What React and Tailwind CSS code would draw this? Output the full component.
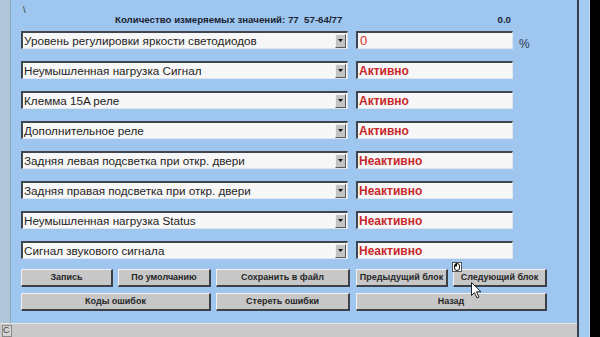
import React from "react";

const ROWS = [
  { label: "Уровень регулировки яркости светодиодов", value: "0", unit: "%" },
  { label: "Неумышленная нагрузка Сигнал", value: "Активно" },
  { label: "Клемма 15A реле", value: "Активно" },
  { label: "Дополнительное реле", value: "Активно" },
  { label: "Задняя левая подсветка при откр. двери", value: "Неактивно" },
  { label: "Задняя правая подсветка при откр. двери", value: "Неактивно" },
  { label: "Неумышленная нагрузка Status", value: "Неактивно" },
  { label: "Сигнал звукового сигнала", value: "Неактивно" },
];

const FIELD =
  "h-[18px] bg-[#f7f7f7] border-t-2 border-l-2 border-t-[#3f4650] border-l-[#3f4650] border-b border-r border-b-[#dfe6ee] border-r-[#dfe6ee]";

const BTN =
  "h-[18px] bg-[#c7c7c7] border-t border-l border-t-[#f2f2f2] border-l-[#f2f2f2] border-b-2 border-r-2 border-b-[#3c4048] border-r-[#3c4048] text-[9px] font-bold text-[#262626] flex items-center justify-center leading-none";

const ComboRow = ({ row }) => {
  const isNumber = row.value === "0";
  return (
    <div className="flex items-center h-[18px]">
      <div className={`${FIELD} w-[327px] flex items-center relative`}>
        <span className="pl-[1px] text-[11.7px] text-[#1e1e1e] leading-none whitespace-nowrap">
          {row.label}
        </span>
        <div className="ml-auto mr-[1px] w-[11px] h-[14px] bg-[#c4c4c4] border-t border-l border-[#f0f0f0] border-b border-r border-b-[#5a5a5a] border-r-[#5a5a5a] flex items-center justify-center">
          <svg width="5" height="3" viewBox="0 0 5 3">
            <path d="M0 0H5L2.5 3Z" fill="#111" />
          </svg>
        </div>
      </div>
      <div className={`${FIELD} w-[157px] ml-[8px] flex items-center`}>
        <span
          className={
            isNumber
              ? "pl-[2px] text-[13px] text-[#d2302c] leading-none"
              : "pl-[1px] text-[12px] font-bold text-[#c8282a] leading-none"
          }
        >
          {row.value}
        </span>
      </div>
      {row.unit && (
        <span className="ml-[6px] mt-[8px] text-[12px] text-[#2e3a4c] leading-none">
          {row.unit}
        </span>
      )}
    </div>
  );
};

const App = () => {
  return (
    <div className="w-[600px] h-[337px] flex bg-black overflow-hidden font-['Liberation_Sans',Arial,sans-serif]">
      <div className="w-[577px] flex flex-col">
        <div className="flex-1 flex">
          <div className="w-[11px] bg-[#b2c6da] border-r border-[#8ea6bf]" />
          <div className="flex-1 bg-[#9ec6ee] pl-[10px] relative">
            <div className="h-[14px] pt-[6px] pl-[2px] text-[9px] text-[#333] leading-none">\</div>
            <div className="h-[17px] flex items-start text-[9.7px] font-bold text-[#1c2433] leading-none pt-[1px]">
              <span className="ml-[94px] whitespace-nowrap">
                Количество измеряемых значений: 77&nbsp;&nbsp;57-64/77
              </span>
              <span className="ml-auto mr-[66px]">0.0</span>
            </div>

            <div className="flex flex-col gap-[12px]">
              {ROWS.map((row, i) => (
                <ComboRow key={i} row={row} />
              ))}
            </div>

            <div className="mt-[10px] flex flex-col gap-[6px]">
              <div className="flex gap-[5px]">
                <button className={`${BTN} w-[92px]`}>Запись</button>
                <button className={`${BTN} w-[93px]`}>По умолчанию</button>
                <button className={`${BTN} w-[134px]`}>Сохранить в файл</button>
                <button className={`${BTN} w-[92px] ml-[1px]`}>Предыдущий блок</button>
                <button className={`${BTN} w-[94px] border-t-[#3c4048] border-l-[#3c4048]`}>
                  Следующий блок
                </button>
              </div>
              <div className="flex gap-[5px]">
                <button className={`${BTN} w-[190px]`}>Коды ошибок</button>
                <button className={`${BTN} w-[134px]`}>Стереть ошибки</button>
                <button className={`${BTN} w-[191px] ml-[1px]`}>Назад</button>
              </div>
            </div>

            {/* mouse hint icon */}
            <div className="absolute left-[441px] top-[262px] w-[10px] h-[10px] bg-white border border-[#555] flex items-center justify-center">
              <svg width="6" height="8" viewBox="0 0 6 8">
                <rect x="0.5" y="0.5" width="5" height="7" rx="2.5" fill="#fff" stroke="#111" />
                <path d="M0.5 3.5V3a2.5 2.5 0 0 1 2.5-2.5V3.5Z" fill="#111" />
              </svg>
            </div>
            {/* cursor */}
            <svg
              className="absolute left-[460px] top-[282px]"
              width="11"
              height="17"
              viewBox="0 0 11 17"
            >
              <path
                d="M0.5 0.5V13.5L3.5 10.5L6 16L8 15L5.5 9.8H10Z"
                fill="#fff"
                stroke="#222"
                strokeWidth="1"
              />
            </svg>
          </div>
        </div>
        <div className="h-[14px] bg-[#c9c9c9] border-t border-[#e6e6e6] flex items-center">
          <div className="ml-[2px] w-[10px] h-[12px] border border-[#8a8a8a] bg-[#d4d4d4] text-[9px] text-[#444] leading-none flex items-center overflow-hidden">
            С
          </div>
        </div>
      </div>
      <div className="w-[2px] bg-[#36424f]" />
      <div className="w-[11px] bg-[#a5cbf0] border-r border-[#c4dcf4]" />
    </div>
  );
};

export default App;
